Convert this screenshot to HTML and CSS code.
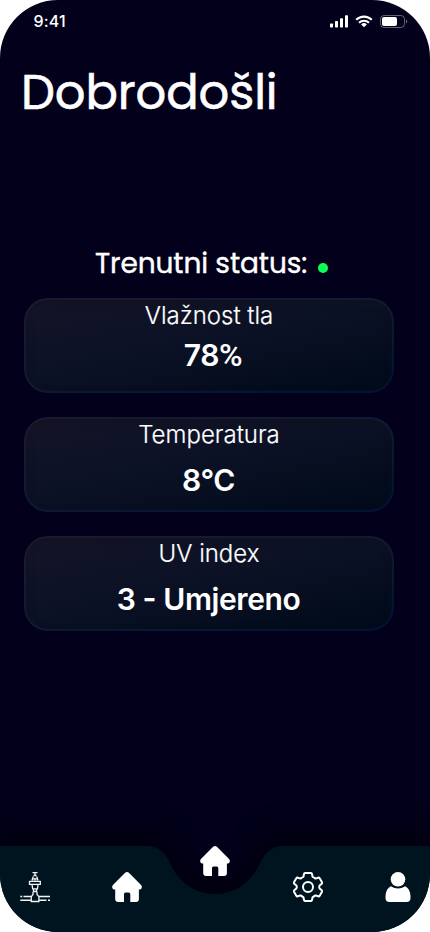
FILE: index.html
```html
<!DOCTYPE html>
<html lang="hr">
<head>
<meta charset="utf-8">
<meta name="viewport" content="width=device-width, initial-scale=1">
<title>Dobrodošli</title>
<link rel="stylesheet" href="styles.css">
</head>
<body>
<div class="screen">
  <header class="statusbar">
    <span class="time">9:41</span>
    <div class="indicators">
      <svg width="18" height="13" viewBox="0 0 18 13" fill="#fff"><rect x="0" y="8.5" width="3" height="4" rx=".7"/><rect x="5" y="6" width="3" height="6.5" rx=".7"/><rect x="10" y="3.2" width="3" height="9.3" rx=".7"/><rect x="15" y=".3" width="3" height="12.2" rx=".7"/></svg>
      <svg width="18" height="13" viewBox="0 0 18 13" fill="none" stroke="#fff" stroke-width="2.1"><path d="M1.2 4.8a11.1 11.1 0 0 1 15.6 0M4 7.8a7 7 0 0 1 10 0"/><path d="M9 12.2 6.1 9.4a4.2 4.2 0 0 1 5.8 0Z" fill="#fff" stroke="none"/></svg>
      <svg width="28" height="13" viewBox="0 0 28 13"><rect x=".5" y=".5" width="24" height="12" rx="3.6" fill="none" stroke="#fff" stroke-opacity=".38"/><rect x="2" y="2" width="15" height="9" rx="2" fill="#fff"/><path d="M26 4.5v4c1.8-.7 1.8-3.3 0-4Z" fill="#fff" fill-opacity=".4"/></svg>
    </div>
  </header>

  <h1 class="title">Dobrodošli</h1>

  <main class="content">
    <h2 class="subtitle"><span class="subtitle-text">Trenutni status:</span><span class="dot"></span></h2>
    <section class="card card-tight">
      <p class="label">Vlažnost tla</p>
      <p class="value">78<span class="percent">%</span></p>
    </section>
    <section class="card">
      <p class="label">Temperatura</p>
      <p class="value">8°C</p>
    </section>
    <section class="card">
      <p class="label">UV index</p>
      <p class="value">3 <span class="dash">-</span> Umjereno</p>
    </section>
  </main>

  <nav class="nav">
    <svg class="nav-shape" width="430" height="86" viewBox="0 0 430 86"><path d="M0 0H148C158 0 165.500 7 170 17C178 36 195 48 215 48C235 48 252 36 260 17C264.500 7 272 0 282 0H430V86H0Z" fill="#001420"/></svg>
    <div class="nav-items">
      <svg class="icon" viewBox="0 0 30 30" fill="none" stroke="#f2f4f5" stroke-width="1.3"><path d="M12.500 .6h5M15 1v3M13.500 3.500h3M13.300 4.500 12 8.500M16.700 4.500 18 8.500M14.200 6v2.500M15.800 6v2.500"/><path d="M9.500 9.300h10.800v3H9.500ZM12 12.500l.7 4.300h4.700l.7-4.300M13.500 17v2.500M16.500 17v2.500M12.800 19.500h4.500M13 20v2.500l-1.700 2.200v4.800h7.600v-4.800L17 22.500V20"/><path d="M.3 24.600h2M3.500 24.600H11M19 24.600h11M.3 28.200H11M19 28.200h7.500M28 28.200h2" stroke-width="1.500"/></svg>
      <svg class="icon icon-home" viewBox="0 0 30 30" fill="#fff"><path d="M13.100 .8Q15-.8 16.900 .8L29.300 13.200Q30.600 15 29.300 16.700Q28.500 17.600 26.900 17.600V27Q26.900 30 23.900 30H18.300V22Q18.300 20.400 16.700 20.400H13.600Q12 20.400 12 22V30H6.200Q3.200 30 3.200 27V17.600Q1.500 17.600 .7 16.700Q-.6 15 .7 13.200Z"/></svg>
      <svg class="icon icon-raised" viewBox="0 0 30 30" fill="#fff"><path d="M13.100 .8Q15-.8 16.900 .8L29.300 13.200Q30.600 15 29.300 16.700Q28.500 17.600 26.900 17.600V27Q26.900 30 23.900 30H18.300V22Q18.300 20.400 16.700 20.400H13.600Q12 20.400 12 22V30H6.200Q3.200 30 3.200 27V17.600Q1.500 17.600 .7 16.700Q-.6 15 .7 13.200Z"/></svg>
      <svg class="icon icon-gear" viewBox="0 0 30 30" fill="none" stroke="#fff" stroke-width="2" stroke-linejoin="round"><path d="M12 1H18Q18.800 1 19 2L19.600 4.900Q21.500 5.800 22.500 6.600L25.200 5.700Q26.200 5.400 26.700 6.300L29 10.200Q29.400 11 28.700 11.700L26.600 13.500Q25.700 15 26.600 16.500L28.700 18.300Q29.400 19 29 19.800L26.700 23.700Q26.200 24.600 25.200 24.300L22.500 23.400Q21.500 24.200 19.600 25.100L19 28Q18.800 29 18 29H12Q11.200 29 11 28L10.400 25.100Q8.500 24.200 7.500 23.400L4.800 24.300Q3.800 24.600 3.300 23.700L1 19.800Q.6 19 1.300 18.300L3.400 16.500Q4.300 15 3.400 13.500L1.300 11.700Q.6 11 1 10.200L3.300 6.300Q3.800 5.400 4.800 5.700L7.500 6.600Q8.500 5.800 10.400 4.900L11 2Q11.200 1 12 1Z"/><circle cx="15" cy="15" r="5"/></svg>
      <svg class="icon icon-user" viewBox="0 0 30 30" fill="#fff"><circle cx="15" cy="7.300" r="7.300"/><path d="M7.800 14.200Q15 18.700 22.200 14.200Q27.500 17 27.500 24.500V26Q27.500 30 23.500 30H6.500Q2.500 30 2.500 26V24.500Q2.500 17 7.800 14.200Z"/></svg>
    </div>
  </nav>
</div>
</body>
</html>
```

FILE: styles.css
```css
* { box-sizing: border-box; margin: 0; padding: 0; }

body { background: #fff; color: #fff; font-family: Inter, "Liberation Sans", sans-serif; }

.screen {
  width: 430px;
  height: 932px;
  display: flex;
  flex-direction: column;
  background: #02001a;
  border-radius: 58px;
  overflow: hidden;
}

.statusbar {
  height: 42px;
  padding: 0 22px 0 33.5px;
  display: flex;
  justify-content: space-between;
  align-items: center;
}

.time { font-size: 16px; font-weight: 500; line-height: 20px; letter-spacing: 0.2px; }

.indicators { display: flex; gap: 7px; align-items: center; }
.indicators svg { display: block; }

.title {
  height: 98px;
  padding: 22px 0 0 21px;
  font-family: Poppins, Inter, sans-serif;
  font-size: 48px;
  font-weight: 400;
  line-height: 58px;
  letter-spacing: -0.1px;
  -webkit-text-stroke: 0.6px #fff;
}

.content {
  flex: 1;
  padding: 107px 36px 0 24px;
  display: flex;
  flex-direction: column;
  gap: 24px;
}

.subtitle {
  height: 33px;
  margin-bottom: -6px;
  padding-left: 71px;
  display: flex;
  align-items: center;
  gap: 10.5px;
  font-family: Poppins, Inter, sans-serif;
  font-size: 28px;
  font-weight: 400;
  line-height: 33px;
  letter-spacing: -0.1px;
  -webkit-text-stroke: 0.4px #fff;
  white-space: nowrap;
}

.dot { width: 10px; height: 10px; margin-top: 9px; border-radius: 50%; background: #0aff54; }

.card {
  height: 95px;
  padding-top: 1px;
  border: 2px solid transparent;
  border-radius: 24px;
  text-align: center;
  background:
    linear-gradient(168deg, #131428 8%, #0b1125 48%, #010b1b 92%) padding-box,
    linear-gradient(168deg, #1a1930 5%, #101a33 50%, #001334 95%) border-box;
  box-shadow: inset 0 3px 7px rgba(15, 17, 24, 0.5);
}

.label { font-size: 24px; font-weight: 300; line-height: 29px; -webkit-text-stroke: 0.2px #fff; }
.value { margin-top: 13px; padding-right: 1px; font-size: 30px; font-weight: 600; line-height: 36px; letter-spacing: -0.4px; }
.card-tight .value { margin-top: 7px; padding: 0 0 0 8px; letter-spacing: -0.4px; }
.percent { font-family: Roboto, sans-serif; font-size: 32px; font-weight: 500; line-height: 1; }
.dash { position: relative; top: -1px; }

.nav { position: relative; height: 86px; }
.nav-shape { display: block; overflow: visible; filter: drop-shadow(0 -15px 12px rgba(0, 0, 0, 0.5)); }

.nav-items {
  position: absolute;
  inset: 26px 17px 30px 20px;
  display: flex;
}

.icon { flex: none; width: 30px; height: 30px; overflow: visible; }
.icon-home { margin-left: 62px; }
.icon-raised { margin: -26px 0 0 58px; }
.icon-gear { margin-left: 63px; }
.icon-user { margin-left: 59.5px; }
```
